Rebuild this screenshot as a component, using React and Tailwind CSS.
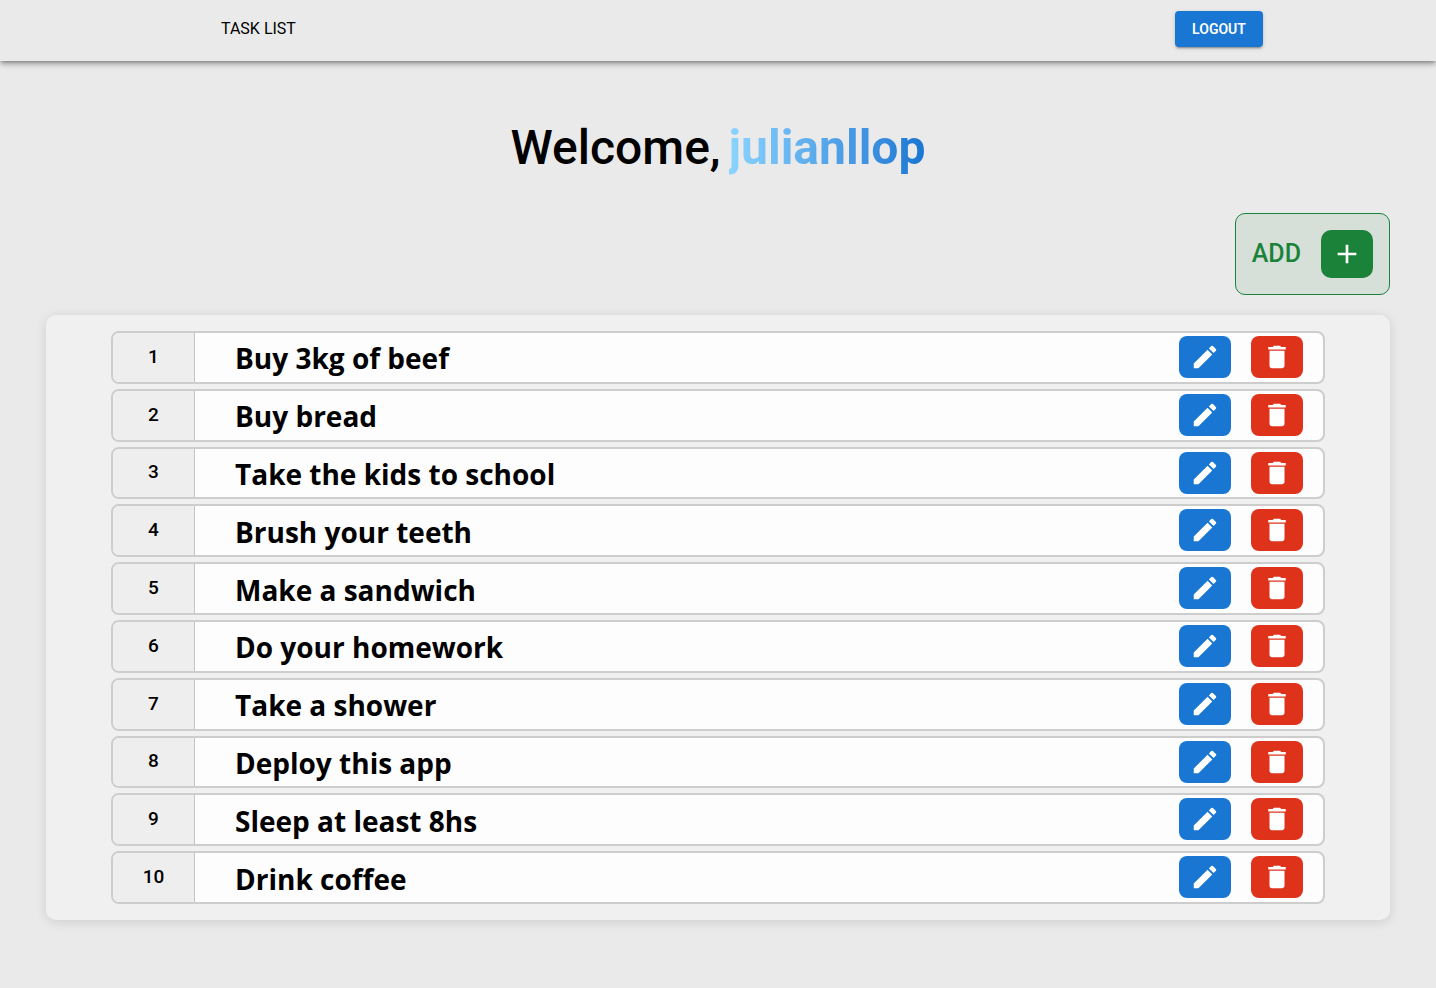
import { MdAdd, MdDelete, MdEdit } from "react-icons/md";

const tasks = [
  "Buy 3kg of beef",
  "Buy bread",
  "Take the kids to school",
  "Brush your teeth",
  "Make a sandwich",
  "Do your homework",
  "Take a shower",
  "Deploy this app",
  "Sleep at least 8hs",
  "Drink coffee",
];

function Header() {
  return (
    <header className="flex h-[61px] items-center justify-between bg-[#eaeaea] pr-[173px] pb-1 pl-[221px] shadow-[0_2px_4px_-1px_rgba(0,0,0,0.35),0_4px_5px_0_rgba(0,0,0,0.14),0_1px_10px_0_rgba(0,0,0,0.12)]">
      <a href="#tasks" className="text-base text-black">
        TASK LIST
      </a>
      <button
        type="button"
        className="h-9 min-w-[88px] rounded bg-[#1976d2] px-4 text-sm font-semibold text-white shadow-[0_3px_1px_-2px_rgba(0,0,0,0.2),0_2px_2px_0_rgba(0,0,0,0.14),0_1px_5px_0_rgba(0,0,0,0.12)]"
      >
        LOGOUT
      </button>
    </header>
  );
}

function TaskRow({ number, title }) {
  return (
    <li className="flex flex-1 overflow-hidden rounded-lg border-2 border-[#cdcdcd] bg-[#fdfdfd]">
      <div className="flex w-[82px] shrink-0 items-center justify-center border-r border-[#c4c4c4] bg-[#eeeeee] pb-px text-[19px] leading-6 font-medium">
        {number}
      </div>
      <h2 className="flex flex-1 items-center pt-0.5 pl-10 font-['Open_Sans','Noto_Sans',sans-serif] text-[28px] leading-10 font-bold">
        {title}
      </h2>
      <div className="flex items-start gap-5 pt-[3px] pr-5">
        <button
          type="button"
          aria-label={`Edit ${title}`}
          className="flex h-[42px] w-[52px] items-center justify-center rounded-lg bg-[#1976d2] text-white"
        >
          <MdEdit className="size-[30px]" />
        </button>
        <button
          type="button"
          aria-label={`Delete ${title}`}
          className="flex h-[42px] w-[52px] items-center justify-center rounded-lg bg-[#df321b] text-white"
        >
          <MdDelete className="size-[30px]" />
        </button>
      </div>
    </li>
  );
}

export default function App() {
  return (
    <div className="min-h-screen bg-[#eaeaea] font-[Roboto,sans-serif] text-black">
      <Header />
      <main id="tasks" className="px-[46px] pb-[68px]">
        <h1 className="flex justify-center gap-2 pt-[59px] text-[48px] leading-[56px] font-medium">
          Welcome,
          <span className="bg-linear-to-r from-[#8ad4ff] to-[#1976d2] bg-clip-text font-bold text-transparent">
            julianllop
          </span>
        </h1>
        <div className="mt-[37px] flex justify-end">
          <div className="flex h-[82px] items-center gap-5 rounded-[10px] border border-[#1b8239] bg-[#d6e0d9] px-4">
            <label htmlFor="add-task" className="text-[25px] leading-8 font-medium text-[#1b8239]">
              ADD
            </label>
            <button
              id="add-task"
              type="button"
              className="flex h-12 w-[52px] items-center justify-center rounded-[10px] bg-[#1b8239] text-white"
            >
              <MdAdd className="size-8" />
            </button>
          </div>
        </div>
        <ul className="mt-5 flex min-h-[605px] flex-col gap-[5px] rounded-[10px] bg-[#f0f0f0] px-[65px] py-4 shadow-[0_2px_12px_rgba(0,0,0,0.12)]">
          {tasks.map((title, index) => (
            <TaskRow key={title} number={index + 1} title={title} />
          ))}
        </ul>
      </main>
    </div>
  );
}
